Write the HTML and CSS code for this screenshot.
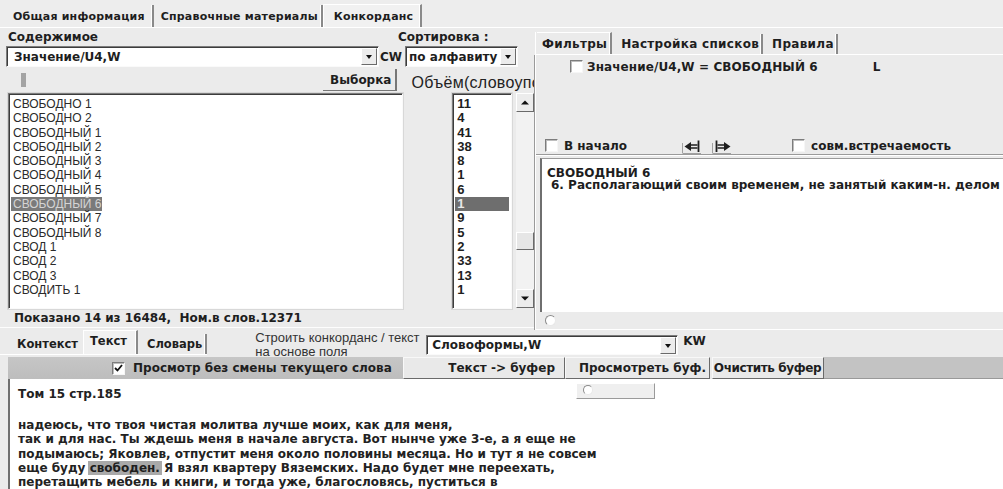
FILE: index.html
```html
<!DOCTYPE html>
<html lang="ru">
<head>
<meta charset="utf-8">
<title>Конкорданс</title>
<link rel="stylesheet" href="styles.css">
</head>
<body>
<div class="app">
  <div class="tabstrip top-tabs">
    <div class="tab">Общая информация</div>
    <div class="tab">Справочные материалы</div>
    <div class="tab active">Конкорданс</div>
  </div>

  <div class="upper">
    <div class="left">
      <div class="label-row">
        <span class="lbl-content">Содержимое</span>
        <span class="lbl-sort">Сортировка :</span>
      </div>
      <div class="combo-row">
        <div class="combo combo-field"><span class="combo-text">Значение/U4,W</span><span class="drop"></span></div>
        <span class="cw">CW</span>
        <div class="combo combo-sort"><span class="combo-text">по алфавиту</span><span class="drop"></span></div>
      </div>
      <div class="tool-row">
        <span class="marker"></span>
        <span class="btn btn-select">Выборка</span>
        <span class="vol">Объём(словоупотреблений)</span>
      </div>
      <div class="list-row">
        <ul class="listbox words">
          <li>СВОБОДНО 1</li>
          <li>СВОБОДНО 2</li>
          <li>СВОБОДНЫЙ 1</li>
          <li>СВОБОДНЫЙ 2</li>
          <li>СВОБОДНЫЙ 3</li>
          <li>СВОБОДНЫЙ 4</li>
          <li>СВОБОДНЫЙ 5</li>
          <li class="sel">СВОБОДНЫЙ 6</li>
          <li>СВОБОДНЫЙ 7</li>
          <li>СВОБОДНЫЙ 8</li>
          <li>СВОД 1</li>
          <li>СВОД 2</li>
          <li>СВОД 3</li>
          <li>СВОДИТЬ 1</li>
        </ul>
        <ul class="listbox nums">
          <li>11</li>
          <li>4</li>
          <li>41</li>
          <li>38</li>
          <li>8</li>
          <li>1</li>
          <li>6</li>
          <li class="sel">1</li>
          <li>9</li>
          <li>5</li>
          <li>2</li>
          <li>33</li>
          <li>13</li>
          <li>1</li>
        </ul>
        <div class="vscroll">
          <span class="sbtn"><svg width="8" height="5" viewBox="0 0 8 5"><path d="M0 4.5 L4 0.5 L8 4.5 Z" fill="#111"/></svg></span>
          <span class="track">
            <span class="thumb"></span>
          </span>
          <span class="sbtn"><svg width="8" height="5" viewBox="0 0 8 5"><path d="M0 0.5 L4 4.5 L8 0.5 Z" fill="#111"/></svg></span>
        </div>
      </div>
      <div class="status">Показано 14 из 16484,&nbsp; Ном.в слов.12371</div>
    </div>

    <div class="right">
      <div class="tabstrip filter-tabs">
        <div class="tab active">Фильтры</div>
        <div class="tab">Настройка списков</div>
        <div class="tab">Правила</div>
      </div>
      <div class="filter-panel">
        <div class="filter-row">
          <span class="check"></span>
          <span class="filter-text">Значение/U4,W = СВОБОДНЫЙ 6</span>
          <span class="filter-l">L</span>
        </div>
        <div class="nav-row">
          <span class="check"></span>
          <span class="nav-label">В начало</span>
          <span class="arrow-btn arrow-first">
            <svg width="20" height="16" viewBox="0 0 20 16"><path d="M1 15.5 H19" stroke="#a0a0a0"/><path d="M0.5 5 V15.5" stroke="#a0a0a0"/><path d="M2.5 8.5 L9 4 V13 Z" fill="#1e1e1e"/><path d="M9 7 H15.5 M9 10 H15.5" stroke="#1e1e1e" stroke-width="1.3"/><path d="M16.5 2.5 V14" stroke="#1e1e1e" stroke-width="1.8"/></svg>
          </span>
          <span class="arrow-btn">
            <svg width="20" height="16" viewBox="0 0 20 16"><path d="M1 15.5 H19" stroke="#a0a0a0"/><path d="M0.5 5 V15.5" stroke="#a0a0a0"/><path d="M18.5 8.5 L12 4 V13 Z" fill="#1e1e1e"/><path d="M5.5 7 H12 M5.5 10 H12" stroke="#1e1e1e" stroke-width="1.3"/><path d="M4.5 2.5 V14" stroke="#1e1e1e" stroke-width="1.8"/></svg>
          </span>
          <span class="check co-check"></span>
          <span class="nav-label">совм.встречаемость</span>
        </div>
        <div class="dict-box">
          <div class="dict-head">СВОБОДНЫЙ 6</div>
          <div class="dict-def">6. Располагающий своим временем, не занятый каким-н. делом</div>
        </div>
        <div class="radio-row"><span class="radio"></span></div>
      </div>
    </div>
  </div>

  <div class="lower">
    <div class="lower-head">
      <div class="tabstrip text-tabs">
        <div class="tab tab-first">Контекст</div>
        <div class="tab active">Текст</div>
        <div class="tab">Словарь</div>
      </div>
      <div class="build-label">Строить конкорданс / текст<br>на основе поля</div>
      <div class="combo combo-forms"><span class="combo-text">Словоформы,W</span><span class="drop"></span></div>
      <span class="kw">KW</span>
    </div>
    <div class="toolbar">
      <div class="tool-view"><span class="check"><svg width="9" height="8" viewBox="0 0 9 8"><path d="M1 4 L3.5 6.5 L8 1" stroke="#111" stroke-width="1.8" fill="none"/></svg></span><span class="view-label">Просмотр без смены текущего слова</span></div>
      <span class="tbtn tbtn-copy">Текст -&gt; буфер</span>
      <span class="tbtn tbtn-view">Просмотреть буф.</span>
      <span class="tbtn tbtn-clear">Очистить буфер</span>
      <span class="tool-rest"></span>
    </div>
    <div class="text-box">
      <span class="radio-box"><span class="radio"></span></span>
      <p class="vol-ref">Том 15 стр.185</p>
      <p class="passage">надеюсь, что твоя чистая молитва лучше моих, как для меня,<br>так и для нас. Ты ждешь меня в начале августа. Вот нынче уже 3-е, а я еще не<br>подымаюсь; Яковлев, отпустит меня около половины месяца. Но и тут я не совсем<br>еще буду <mark>свободен.</mark> Я взял квартеру Вяземских. Надо будет мне переехать,<br>перетащить мебель и книги, и тогда уже, благословясь, пуститься в</p>
    </div>
  </div>
</div>
</body>
</html>
```

FILE: styles.css
```css
* { box-sizing: border-box; }

html, body { margin: 0; padding: 0; }

body {
  width: 1003px;
  height: 489px;
  overflow: hidden;
  background: #ebebeb;
  color: #1e1e1e;
  font: bold 12px "DejaVu Sans", "Liberation Sans", sans-serif;
}

.app { display: flex; flex-direction: column; height: 489px; overflow: hidden; }

ul { list-style: none; margin: 0; padding: 0; }
p { margin: 0; }

/* ---- tab strips ---- */
.tabstrip { display: flex; align-items: flex-end; flex: none; }
.tab {
  display: flex;
  align-items: center;
  height: 20px;
  padding: 0 3px 0 8px;
  border-right: 2px solid #8a8a8a;
  box-shadow: inset -1px 0 0 #fff;
  white-space: nowrap;
}
.tab.active {
  background: #f1f1f1;
  border-left: 1px solid #fff;
  border-top: 1px solid #fff;
}

.top-tabs {
  height: 28px;
  padding-left: 7px;
  border-bottom: 1px solid #fff;
  background: #ededed;
  font-size: 11px;
  letter-spacing: 0.2px;
}
.top-tabs .tab { height: 22px; padding: 0 7px 0 6px; }
.top-tabs .tab + .tab { padding: 0 3px 0 7px; }
.top-tabs .tab.active { height: 23px; padding: 0 7px 0 10px; }

/* ---- upper area ---- */
.upper { display: flex; height: 302px; flex: none; }
.left { width: 534px; display: flex; flex-direction: column; }

.label-row {
  display: grid;
  grid-template-columns: 390px auto;
  align-items: center;
  height: 18px;
  padding-left: 8px;
  flex: none;
}

.combo-row { display: flex; align-items: center; height: 21px; padding-left: 6px; flex: none; }
.combo {
  display: flex;
  align-items: center;
  height: 21px;
  background: #fff;
  border: 1px solid;
  border-color: #7c7c7c #fafafa #fafafa #7c7c7c;
  box-shadow: inset 1px 1px 0 #3c3c3c;
  flex: none;
}
.combo-text { flex: 1; padding-left: 7px; white-space: nowrap; overflow: hidden; }
.drop {
  position: relative;
  width: 16px;
  height: 17px;
  margin-right: 1px;
  background: #ececec;
  border: 1px solid;
  border-color: #fff #6a6a6a #6a6a6a #fff;
}
.drop::after {
  content: "";
  position: absolute;
  left: 4px;
  top: 6px;
  border: 3.5px solid transparent;
  border-top: 4px solid #111;
  border-bottom: 0;
}
.combo-field { width: 373px; }
.cw { margin-left: 1px; width: 25px; }
.combo-sort { width: 113px; }
.combo-sort .combo-text { padding-left: 3px; }

.tool-row { display: flex; align-items: center; height: 26px; flex: none; }
.marker { width: 5px; height: 14px; margin-left: 21px; background: #a3a3a3; }
.btn {
  display: flex;
  align-items: center;
  height: 22px;
  padding: 0 4px 0 7px;
  border-right: 2px solid #777;
  border-bottom: 1px solid #777;
  white-space: nowrap;
}
.btn-select { margin-left: 297px; }
.vol {
  margin-left: 14px;
  margin-top: 5px;
  flex: 1;
  overflow: hidden;
  white-space: nowrap;
  font: normal 16px "Liberation Sans", sans-serif;
  letter-spacing: 0.3px;
  color: #222;
}

.list-row { display: flex; height: 216px; flex: none; }
.listbox {
  background: #fff;
  border: 1px solid;
  border-color: #7c7c7c #fafafa #fafafa #7c7c7c;
  box-shadow: inset 1px 1px 0 #3c3c3c, 0 0 0 1px #d8d8d8;
  padding: 3px 0 0 2px;
  overflow: hidden;
}
.listbox li { height: 14.3px; line-height: 14.3px; white-space: nowrap; }
.words {
  width: 396px;
  margin-left: 8px;
  font: normal 12px "Liberation Sans", sans-serif;
  color: #2a2a2a;
}
.words li { padding-left: 2px; }
.words li.sel { width: 91px; background: #7a7a7a; color: #d4d4d4; }
.nums {
  width: 60px;
  margin-left: 49px;
  font: bold 13px "Liberation Sans", sans-serif;
  padding-left: 2px;
}
.nums li { padding-left: 2px; }
.nums li.sel { background: #6e6e6e; color: #e8e8e8; margin-right: 2px; }

.vscroll {
  display: flex;
  flex-direction: column;
  width: 18px;
  margin-left: 4px;
  height: 215px;
  background: #f2f2f2;
}
.sbtn {
  display: flex;
  align-items: center;
  justify-content: center;
  height: 19px;
  background: #ececec;
  border: 1px solid;
  border-color: #fff #6a6a6a #6a6a6a #fff;
}
.track { flex: 1; display: flex; flex-direction: column; justify-content: flex-end; padding-bottom: 39px; }
.thumb {
  height: 18px;
  background: #e6e6e6;
  border: 1px solid;
  border-color: #fff #6a6a6a #6a6a6a #fff;
}

.status {
  height: 19px;
  display: flex;
  align-items: center;
  padding-left: 14px;
  border-bottom: 1px solid #fdfdfd;
  white-space: nowrap;
  flex: none;
}

/* ---- right area ---- */
.right { flex: 1; display: flex; flex-direction: column; padding-top: 4px; padding-left: 1px; }
.filter-tabs {
  height: 23px;
  border-left: 1px solid #fff;
  padding-left: 1px;
  border-bottom: 1px solid #fff;
  letter-spacing: 0.3px;
}
.filter-tabs .tab { height: 20px; }
.filter-tabs .tab.active { background: #ebebeb; border-left: 0; border-top: 1px solid #fff; padding: 0 3px 0 5px; height: 22px; }
.filter-tabs .tab + .tab { padding: 0 2px 0 9px; }

.filter-panel {
  flex: 1;
  display: flex;
  flex-direction: column;
  border-left: 1px solid #fff;
  border-bottom: 1px solid #fff;
  box-shadow: -1px 0 0 #9a9a9a;
}
.check {
  display: inline-flex;
  align-items: center;
  justify-content: center;
  width: 13px;
  height: 13px;
  background: #fff;
  border: 1px solid;
  border-color: #7c7c7c #f6f6f6 #f6f6f6 #7c7c7c;
  box-shadow: inset 1px 1px 0 #bdbdbd;
  flex: none;
}
.filter-row { display: flex; align-items: center; height: 15px; margin-top: 4px; padding-left: 34px; flex: none; }
.filter-text { margin-left: 4px; letter-spacing: 0.1px; }
.filter-l { margin-left: 55px; }

.nav-row {
  display: flex;
  align-items: center;
  height: 18px;
  margin-top: 63px;
  padding-left: 9px;
  border-bottom: 1px solid #9a9a9a;
  box-shadow: 0 1px 0 #fff;
  flex: none;
}
.nav-label { margin-left: 6px; white-space: nowrap; }
.arrow-btn { display: flex; width: 20px; height: 16px; margin-left: 10px; }
.arrow-first { margin-left: 55px; }
.co-check { margin-left: 60px; }

.dict-box {
  height: 154px;
  margin-top: 3px;
  margin-left: 4px;
  background: #fff;
  border-left: 2px solid #6f6f6f;
  border-top: 1px solid #9a9a9a;
  padding: 8px 0 0 5px;
  line-height: 12px;
  white-space: nowrap;
  overflow: hidden;
  flex: none;
}
.dict-def { padding-left: 4px; }

.radio-row { display: flex; align-items: center; height: 16px; padding-left: 9px; flex: none; }
.radio {
  display: inline-block;
  width: 11px;
  height: 11px;
  border-radius: 50%;
  background: #fff;
  border: 1px solid;
  border-color: #8a8a8a #e8e8e8 #e8e8e8 #8a8a8a;
}

/* ---- lower area ---- */
.lower { flex: 1; min-height: 0; display: flex; flex-direction: column; overflow: hidden; }
.lower-head { display: flex; align-items: flex-start; height: 27px; flex: none; }
.text-tabs { height: 25px; padding-left: 12px; border-bottom: 1px solid #fff; font-size: 11.5px; }
.text-tabs .tab { height: 20px; padding: 0 3px 0 9px; }
.text-tabs .tab-first { padding: 0 5px 0 5px; border-right: 0; box-shadow: none; }
.text-tabs .tab.active { height: 24px; padding: 0 9px 4px 6px; }
.build-label {
  margin-left: 48px;
  margin-top: 1px;
  font: normal 13px "Liberation Sans", sans-serif;
  line-height: 14px;
  color: #333;
  white-space: nowrap;
  width: 171px;
}
.combo-forms { width: 252px; margin-top: 5px; height: 20px; }
.combo-forms .combo-text { padding-left: 5px; }
.kw { margin-left: 5px; margin-top: 4px; }

.toolbar { display: flex; height: 22px; align-items: stretch; flex: none; }
.tool-view {
  display: flex;
  align-items: center;
  width: 395px;
  margin-left: 8px;
  padding-left: 104px;
  background: linear-gradient(#c6c6c6, #bdbdbd);
  white-space: nowrap;
}
.view-label { margin-left: 8px; }
.tbtn {
  display: flex;
  align-items: center;
  justify-content: flex-end;
  background: #e9e9e9;
  border: 1px solid;
  border-color: #f8f8f8 #6a6a6a #6a6a6a #f8f8f8;
  padding-right: 9px;
  white-space: nowrap;
  flex: none;
}
.tbtn-copy { width: 162px; }
.tbtn-view { width: 145px; padding-right: 3px; }
.tbtn-clear { width: 112px; margin-left: 2px; padding-right: 1px; justify-content: center; letter-spacing: -0.4px; }
.tool-rest { flex: 1; background: #c3c3c3; border-bottom: 1px solid #999; }

.text-box {
  position: relative;
  flex: 1;
  min-height: 0;
  margin-left: 8px;
  background: #fff;
  border-left: 2px solid #6f6f6f;
  padding: 8px 0 0 8px;
  line-height: 14.2px;
  white-space: nowrap;
  color: #222;
  overflow: hidden;
}
.radio-box {
  position: absolute;
  left: 566px;
  top: 4px;
  width: 79px;
  height: 16px;
  background: #efefef;
  border: 1px solid;
  border-color: #fff #9a9a9a #9a9a9a #fff;
  padding: 1px 0 0 6px;
  display: flex;
}
.radio-box .radio { width: 10px; height: 10px; }
.vol-ref { margin-bottom: 17px; }
mark { background: #a9a9a9; color: #1e1e1e; padding: 0 2px; margin: 0 -2px; }
```
